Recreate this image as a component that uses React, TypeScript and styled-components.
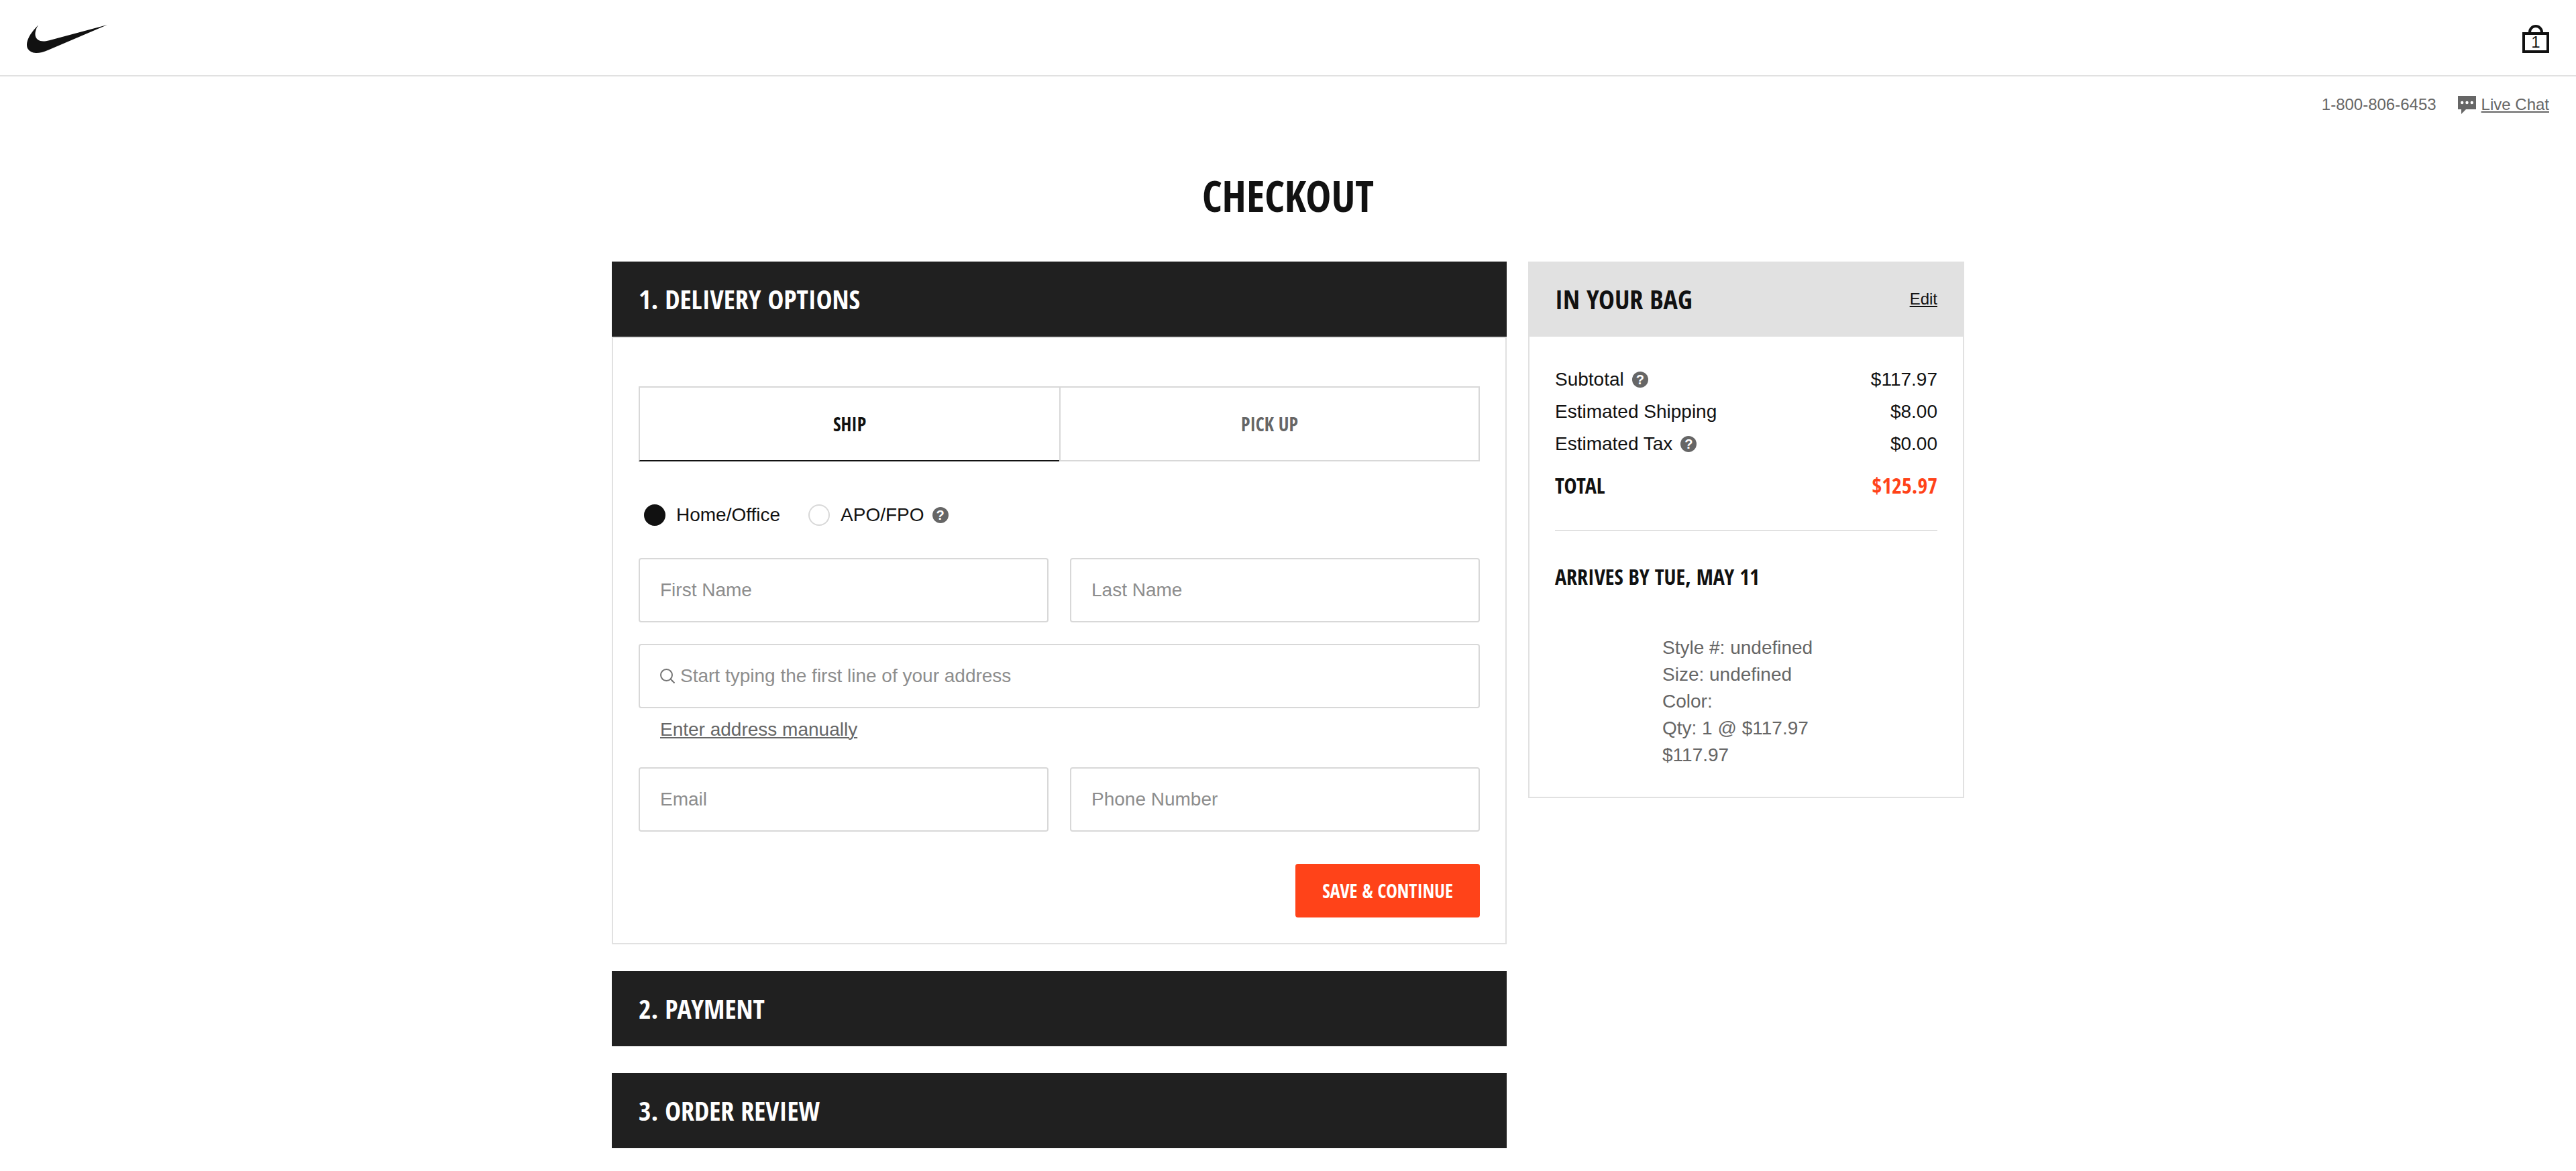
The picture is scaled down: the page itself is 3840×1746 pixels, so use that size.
import React, { useState } from 'react';
import styled, { createGlobalStyle } from 'styled-components';

const INK = '#111111';
const GREY = '#666666';
const LINE = '#e1e1e1';
const FIELD_LINE = '#d8d8d8';
const ORANGE = '#ff4319';
const BODY_FONT = '"Liberation Sans", Arial, sans-serif';
const HEAD_FONT = '"Open Sans Condensed", "Roboto Condensed", sans-serif';

const GlobalStyle = createGlobalStyle`
  *, *::before, *::after { box-sizing: border-box; }
  body {
    margin: 0;
    background: #ffffff;
    color: ${INK};
    font: 28px/40px ${BODY_FONT};
  }
  h1, h2, h3, p, dl, dd, ul { margin: 0; padding: 0; }
  button, input { font: inherit; color: inherit; }
  svg { display: block; }
`;

const TopBar = styled.header`
  display: flex;
  align-items: center;
  justify-content: space-between;
  height: 114px;
  padding: 0 40px;
  border-bottom: 2px solid ${LINE};
`;

const IconLink = styled.a`
  position: relative;
  display: block;
  padding-top: 4px;
  color: ${INK};
  text-decoration: none;
`;

const BagCount = styled.span`
  position: absolute;
  inset: 14px 0 0;
  text-align: center;
  font-size: 24px;
  line-height: 32px;
`;

const HelpBar = styled.div`
  display: flex;
  align-items: center;
  justify-content: flex-end;
  gap: 32px;
  padding: 26px 40px 0;
  color: ${GREY};
  font-size: 24px;
  line-height: 32px;
`;

const ChatLink = styled.a`
  display: flex;
  align-items: center;
  gap: 8px;
  color: inherit;
  text-decoration: none;

  span {
    text-decoration: underline;
    text-decoration-thickness: 2px;
    text-underline-offset: 2px;
  }
`;

const PageTitle = styled.h1`
  margin: 80px 0 58px;
  text-align: center;
  font: 700 64px/80px ${HEAD_FONT};
`;

const Columns = styled.main`
  display: grid;
  grid-template-columns: minmax(0, 1fr) 650px;
  align-items: start;
  gap: 32px;
  max-width: 2096px;
  margin: 0 auto;
  padding: 0 40px 34px;
`;

const Steps = styled.div`
  display: flex;
  flex-direction: column;
  gap: 40px;
`;

const StepTitle = styled.h2`
  padding: 28px 40px;
  background: #202020;
  color: #ffffff;
  font: 700 40px/56px ${HEAD_FONT};
`;

const StepBody = styled.form`
  display: flex;
  flex-direction: column;
  padding: 72px 38px 38px;
  border: 2px solid ${LINE};
`;

const Tabs = styled.div`
  display: grid;
  grid-template-columns: 1fr 1fr;
  margin-bottom: 64px;
`;

const Tab = styled.button<{ $active?: boolean }>`
  height: 112px;
  padding: 0;
  background: #ffffff;
  border: 2px solid ${FIELD_LINE};
  border-right-width: ${p => (p.$active ? 0 : 2)}px;
  border-bottom-color: ${p => (p.$active ? INK : FIELD_LINE)};
  color: ${p => (p.$active ? INK : GREY)};
  font: 700 28px/40px ${HEAD_FONT};
  cursor: pointer;
`;

const RadioRow = styled.div`
  display: flex;
  align-items: center;
  gap: 12px;
  margin-bottom: 48px;
  padding-left: 8px;
`;

const RadioLabel = styled.label<{ $spaced?: boolean }>`
  display: flex;
  align-items: center;
  gap: 16px;
  margin-right: ${p => (p.$spaced ? 30 : 0)}px;
  line-height: 32px;
`;

const Radio = styled.input`
  appearance: none;
  width: 32px;
  height: 32px;
  margin: 0;
  border: 2px solid ${FIELD_LINE};
  border-radius: 50%;

  &:checked {
    background: ${INK};
    border-color: ${INK};
  }
`;

const HelpButton = styled.button`
  width: 24px;
  height: 24px;
  padding: 0;
  border: 0;
  border-radius: 50%;
  background: ${GREY};
  color: #ffffff;
  font-size: 20px;
  font-weight: 700;
  line-height: 24px;
  text-align: center;
`;

const FieldGrid = styled.div`
  display: grid;
  grid-template-columns: 1fr 1fr;
  gap: 32px;
`;

const Field = styled.label<{ $wide?: boolean }>`
  display: flex;
  align-items: center;
  gap: 8px;
  grid-column: ${p => (p.$wide ? '1 / -1' : 'auto')};
  height: 96px;
  padding: 0 30px;
  border: 2px solid ${FIELD_LINE};
  border-radius: 4px;
  color: #757575;
`;

const FieldInput = styled.input`
  flex: 1;
  min-width: 0;
  height: 100%;
  padding: 0;
  border: 0;
  outline: 0;
  background: transparent;
  color: ${INK};

  &::placeholder {
    color: #8d8d8d;
    opacity: 1;
  }
`;

const ManualLink = styled.a`
  align-self: flex-start;
  margin: 16px 32px 40px;
  color: ${GREY};
  line-height: 32px;
  text-decoration-thickness: 2px;
  text-underline-offset: 2px;
`;

const SaveButton = styled.button`
  align-self: flex-end;
  height: 80px;
  margin-top: 48px;
  padding: 0 40px;
  border: 0;
  border-radius: 4px;
  background: ${ORANGE};
  color: #ffffff;
  font: 700 28px/40px ${HEAD_FONT};
  cursor: pointer;
`;

const Bag = styled.aside`
  border: 2px solid ${LINE};
  border-top: 0;
`;

const BagHead = styled.div`
  display: flex;
  align-items: center;
  justify-content: space-between;
  padding: 28px 38px;
  background: ${LINE};

  h2 {
    font: 700 40px/56px ${HEAD_FONT};
  }

  a {
    color: ${INK};
    font-size: 24px;
    text-decoration-thickness: 2px;
    text-underline-offset: 2px;
  }
`;

const BagBody = styled.div`
  padding: 40px 38px 42px;
`;

const Totals = styled.dl`
  padding-bottom: 44px;
  border-bottom: 2px solid ${LINE};
`;

const CostRow = styled.div`
  display: flex;
  justify-content: space-between;
  line-height: 48px;

  dt {
    display: flex;
    align-items: center;
    gap: 12px;
  }
`;

const TotalRow = styled.div`
  display: flex;
  justify-content: space-between;
  margin-top: 16px;
  font: 700 32px/44px ${HEAD_FONT};

  dd { color: ${ORANGE}; }
`;

const Arrival = styled.h3`
  margin: 48px 0 66px;
  font: 700 32px/40px ${HEAD_FONT};
`;

const ItemDetails = styled.ul`
  margin-left: 160px;
  color: ${GREY};
  list-style: none;
`;

const Swoosh = () => (
  <svg width="120" height="42" viewBox="0 7.8 24 8.4" fill={INK} aria-hidden="true">
    <path d="M24 7.8L6.442 15.276c-1.456.616-2.679.925-3.668.925-1.12 0-1.933-.392-2.437-1.177-.317-.504-.41-1.143-.28-1.918.13-.775.476-1.6 1.036-2.478.467-.71 1.232-1.643 2.297-2.8a6.122 6.122 0 00-.784 1.848c-.28 1.195-.028 2.072.756 2.632.373.261.886.392 1.54.392.522 0 1.11-.084 1.764-.252L24 7.8z" />
  </svg>
);

const BagIcon = () => (
  <svg width="40" height="42" viewBox="0 0 40 42" fill="none" stroke={INK} strokeWidth="4" aria-hidden="true">
    <path d="M2 13h36v27H2zM11 13v-2a9 9 0 0 1 18 0v2" />
  </svg>
);

const ChatIcon = () => (
  <svg width="27" height="27" viewBox="0 0 27 27" aria-hidden="true">
    <path d="M0 0h27v20H12l-7 7v-7H0z" fill={GREY} />
    <g fill="#ffffff">
      <circle cx="6.2" cy="10" r="2.2" />
      <circle cx="13.5" cy="10" r="2.2" />
      <circle cx="20.8" cy="10" r="2.2" />
    </g>
  </svg>
);

const SearchIcon = () => (
  <svg width="22" height="22" viewBox="0 0 22 22" fill="none" stroke="currentColor" strokeWidth="2" aria-hidden="true">
    <circle cx="9.5" cy="9.5" r="8.5" />
    <path d="M15.5 15.5l6 6" />
  </svg>
);

const Help = ({ about }: { about: string }) => (
  <HelpButton type="button" aria-label={`Help: ${about}`}>?</HelpButton>
);

type TextFieldProps = { label: string; type?: string; wide?: boolean; icon?: React.ReactNode };

const TextField = ({ label, type = 'text', wide, icon }: TextFieldProps) => (
  <Field $wide={wide}>
    {icon}
    <FieldInput type={type} placeholder={label} aria-label={label} />
  </Field>
);

const costs = [
  { name: 'Subtotal', amount: '$117.97', help: true },
  { name: 'Estimated Shipping', amount: '$8.00', help: false },
  { name: 'Estimated Tax', amount: '$0.00', help: true },
];

const details = ['Style #: undefined', 'Size: undefined', 'Color:', 'Qty: 1 @ $117.97', '$117.97'];

export default function App() {
  const [place, setPlace] = useState('home');

  return (
    <>
      <GlobalStyle />
      <TopBar>
        <IconLink href="#home" aria-label="Nike home"><Swoosh /></IconLink>
        <IconLink href="#bag" aria-label="Bag, 1 item">
          <BagIcon />
          <BagCount>1</BagCount>
        </IconLink>
      </TopBar>
      <HelpBar>
        <span>1-800-806-6453</span>
        <ChatLink href="#chat"><ChatIcon /><span>Live Chat</span></ChatLink>
      </HelpBar>
      <PageTitle>CHECKOUT</PageTitle>
      <Columns>
        <Steps>
          <section>
            <StepTitle>1. DELIVERY OPTIONS</StepTitle>
            <StepBody>
              <Tabs>
                <Tab type="button" $active>SHIP</Tab>
                <Tab type="button">PICK UP</Tab>
              </Tabs>
              <RadioRow>
                <RadioLabel $spaced>
                  <Radio type="radio" name="place" checked={place === 'home'} onChange={() => setPlace('home')} />
                  Home/Office
                </RadioLabel>
                <RadioLabel>
                  <Radio type="radio" name="place" checked={place === 'apo'} onChange={() => setPlace('apo')} />
                  APO/FPO
                </RadioLabel>
                <Help about="APO/FPO" />
              </RadioRow>
              <FieldGrid>
                <TextField label="First Name" />
                <TextField label="Last Name" />
                <TextField label="Start typing the first line of your address" wide icon={<SearchIcon />} />
              </FieldGrid>
              <ManualLink href="#manual">Enter address manually</ManualLink>
              <FieldGrid>
                <TextField label="Email" type="email" />
                <TextField label="Phone Number" type="tel" />
              </FieldGrid>
              <SaveButton type="button">SAVE &amp; CONTINUE</SaveButton>
            </StepBody>
          </section>
          <StepTitle>2. PAYMENT</StepTitle>
          <StepTitle>3. ORDER REVIEW</StepTitle>
        </Steps>
        <Bag>
          <BagHead>
            <h2>IN YOUR BAG</h2>
            <a href="#edit">Edit</a>
          </BagHead>
          <BagBody>
            <Totals>
              {costs.map(cost => (
                <CostRow key={cost.name}>
                  <dt>{cost.name}{cost.help && <Help about={cost.name} />}</dt>
                  <dd>{cost.amount}</dd>
                </CostRow>
              ))}
              <TotalRow>
                <dt>TOTAL</dt>
                <dd>$125.97</dd>
              </TotalRow>
            </Totals>
            <Arrival>ARRIVES BY TUE, MAY 11</Arrival>
            <ItemDetails>
              {details.map((line, i) => <li key={i}>{line}</li>)}
            </ItemDetails>
          </BagBody>
        </Bag>
      </Columns>
    </>
  );
}
